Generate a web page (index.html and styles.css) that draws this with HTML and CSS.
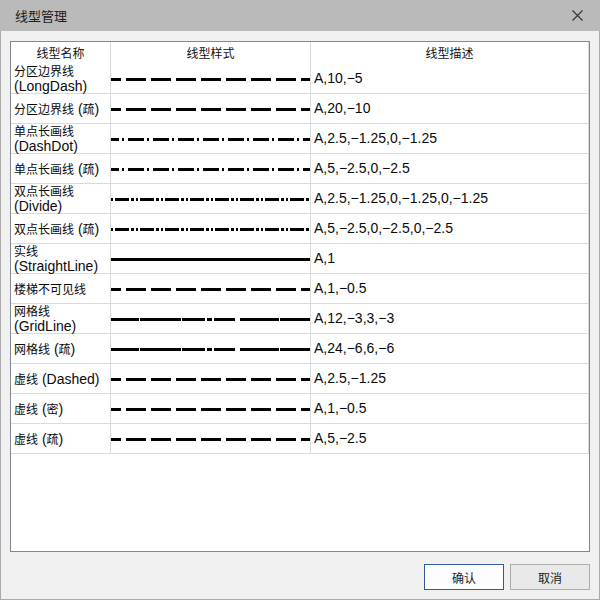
FILE: index.html
```html
<!DOCTYPE html>
<html lang="zh">
<head>
<meta charset="utf-8">
<title>线型管理</title>
<link rel="stylesheet" href="styles.css">
</head>
<body>
<div class="window">
  <div class="titlebar">
    <span class="title">线型管理</span>
    <svg class="close" width="11" height="11" viewBox="0 0 11 11"><path d="M0.5 0.5 L10.5 10.5 M10.5 0.5 L0.5 10.5"/></svg>
  </div>
  <div class="content">
    <div class="box">
      <div class="grid">
        <div class="hd">线型名称</div>
        <div class="hd">线型样式</div>
        <div class="hd">线型描述</div>

        <div class="c name two"><span class="zh">分区边界线</span><br>(LongDash)</div>
        <div class="c line"><svg class="ln dash" width="199" height="29"><line x1="0" y1="15.5" x2="199" y2="15.5"/></svg></div>
        <div class="c desc">A,10,−5</div>

        <div class="c name"><span class="zh">分区边界线</span> (<span class="zh">疏</span>)</div>
        <div class="c line"><svg class="ln dash" width="199" height="29"><line x1="0" y1="15.5" x2="199" y2="15.5"/></svg></div>
        <div class="c desc">A,20,−10</div>

        <div class="c name two"><span class="zh">单点长画线</span><br>(DashDot)</div>
        <div class="c line"><svg class="ln dashdot" width="199" height="29"><line x1="0" y1="15.5" x2="199" y2="15.5"/></svg></div>
        <div class="c desc">A,2.5,−1.25,0,−1.25</div>

        <div class="c name"><span class="zh">单点长画线</span> (<span class="zh">疏</span>)</div>
        <div class="c line"><svg class="ln dashdot" width="199" height="29"><line x1="0" y1="15.5" x2="199" y2="15.5"/></svg></div>
        <div class="c desc">A,5,−2.5,0,−2.5</div>

        <div class="c name two"><span class="zh">双点长画线</span><br>(Divide)</div>
        <div class="c line"><svg class="ln divide" width="199" height="29"><line x1="0" y1="15.5" x2="199" y2="15.5"/></svg></div>
        <div class="c desc">A,2.5,−1.25,0,−1.25,0,−1.25</div>

        <div class="c name"><span class="zh">双点长画线</span> (<span class="zh">疏</span>)</div>
        <div class="c line"><svg class="ln divide" width="199" height="29"><line x1="0" y1="15.5" x2="199" y2="15.5"/></svg></div>
        <div class="c desc">A,5,−2.5,0,−2.5,0,−2.5</div>

        <div class="c name two"><span class="zh">实线</span><br>(StraightLine)</div>
        <div class="c line"><svg class="ln solid" width="199" height="29"><line x1="0" y1="15.5" x2="199" y2="15.5"/></svg></div>
        <div class="c desc">A,1</div>

        <div class="c name"><span class="zh">楼梯不可见线</span></div>
        <div class="c line"><svg class="ln dash" width="199" height="29"><line x1="0" y1="15.5" x2="199" y2="15.5"/></svg></div>
        <div class="c desc">A,1,−0.5</div>

        <div class="c name two"><span class="zh">网格线</span><br>(GridLine)</div>
        <div class="c line"><svg class="ln grid-ln" width="199" height="29"><line x1="0" y1="15.5" x2="199" y2="15.5"/></svg></div>
        <div class="c desc">A,12,−3,3,−3</div>

        <div class="c name"><span class="zh">网格线</span> (<span class="zh">疏</span>)</div>
        <div class="c line"><svg class="ln grid-ln" width="199" height="29"><line x1="0" y1="15.5" x2="199" y2="15.5"/></svg></div>
        <div class="c desc">A,24,−6,6,−6</div>

        <div class="c name"><span class="zh">虚线</span> (Dashed)</div>
        <div class="c line"><svg class="ln dash" width="199" height="29"><line x1="0" y1="15.5" x2="199" y2="15.5"/></svg></div>
        <div class="c desc">A,2.5,−1.25</div>

        <div class="c name"><span class="zh">虚线</span> (<span class="zh">密</span>)</div>
        <div class="c line"><svg class="ln dash" width="199" height="29"><line x1="0" y1="15.5" x2="199" y2="15.5"/></svg></div>
        <div class="c desc">A,1,−0.5</div>

        <div class="c name"><span class="zh">虚线</span> (<span class="zh">疏</span>)</div>
        <div class="c line"><svg class="ln dash" width="199" height="29"><line x1="0" y1="15.5" x2="199" y2="15.5"/></svg></div>
        <div class="c desc">A,5,−2.5</div>
      </div>
    </div>
  </div>
  <div class="footer">
    <button class="btn primary">确认</button>
    <button class="btn">取消</button>
  </div>
</div>
</body>
</html>
```
FILE: styles.css
```css
* { box-sizing: border-box; }
html, body {
  margin: 0;
  padding: 0;
  width: 600px;
  height: 600px;
  overflow: hidden;
}
body {
  background: #f0f0f0;
  font-family: "Liberation Sans", "Noto Sans CJK SC", sans-serif;
  color: #000;
}
.window {
  width: 600px;
  height: 600px;
  display: flex;
  flex-direction: column;
  border: 1px solid #a9a9a9;
  border-top: none;
}
.titlebar {
  height: 31px;
  margin: 0 -1px;
  background: #bababa;
  display: flex;
  align-items: center;
  justify-content: space-between;
  padding: 0 17px 0 15px;
  flex: none;
}
.title {
  font-family: "Noto Sans CJK SC", sans-serif;
  font-size: 13px;
  color: #1b1b1b;
  line-height: 16px;
}
.close path {
  stroke: #333;
  stroke-width: 1.1;
  fill: none;
}
.content {
  padding: 10px 9px 0 9px;
  flex: none;
}
.box {
  height: 511px;
  border: 1px solid #828790;
  background: #fff;
}
.grid {
  display: grid;
  grid-template-columns: 100px 200px 278px;
  grid-template-rows: 22px;
  grid-auto-rows: 30px;
}
.hd {
  font-family: "Noto Sans CJK SC", sans-serif;
  font-size: 12px;
  line-height: 14px;
  border-right: 1px solid #dadada;
  display: flex;
  align-items: center;
  justify-content: center;
  color: #111;
}
.c {
  border-right: 1px solid #dadada;
  border-bottom: 1px solid #dadada;
  font-size: 14px;
  color: #0a0a0a;
}
.zh {
  font-family: "Noto Sans CJK SC", sans-serif;
  font-size: 12px;
}
.name, .desc {
  display: block;
  padding-left: 3px;
  white-space: nowrap;
  line-height: 29px;
}
.name .zh, .desc .zh { line-height: 29px; }
.name.two {
  line-height: 14.5px;
}
.name.two .zh { line-height: 14.5px; }
.line { overflow: hidden; }
.ln { display: block; }
.ln line {
  stroke: #000;
  stroke-width: 3;
}
.ln.dash line { stroke-dasharray: 20 5; stroke-dashoffset: 10; }
.ln.dashdot line { stroke-dasharray: 16 3 2 4; stroke-dashoffset: 8; }
.ln.divide line { stroke-dasharray: 14 2 3 2 2 2; stroke-dashoffset: -4; }
.ln.grid-ln line { stroke-dasharray: 28 1 41 1 23 2 5 2 21 5 39 1 40; }
.footer {
  display: flex;
  justify-content: flex-end;
  gap: 6px;
  padding: 12px 9px 0 0;
}
.btn {
  width: 80px;
  height: 26px;
  font-family: "Noto Sans CJK SC", sans-serif;
  font-size: 12px;
  color: #1a1a1a;
  background: #e9e9e9;
  border: 1px solid #adadad;
  border-radius: 0;
  padding: 0;
  margin: 0;
}
.btn.primary {
  background: #fdfdfd;
  border: 1px solid #2f5b9a;
}
```
